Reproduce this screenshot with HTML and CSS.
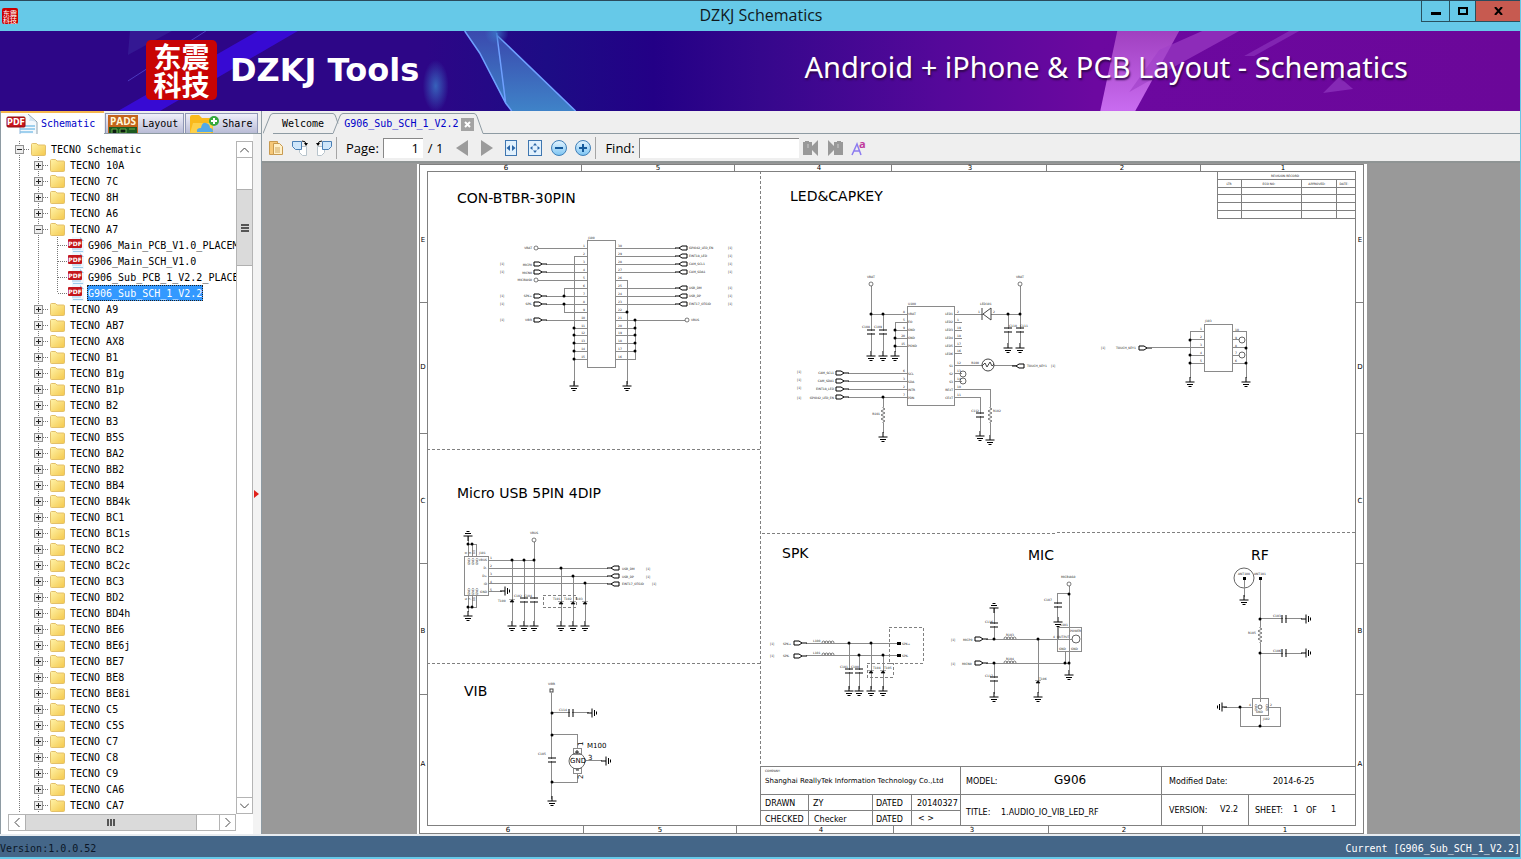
FILE: index.html
```html
<!DOCTYPE html>
<html lang="en">
    <head>
        <meta charset="utf-8">
        <title>DZKJ Schematics</title>
        <link rel="stylesheet" href="styles.css">
    </head>
    <body>
        <!-- shared icons -->
        <svg class="defs" aria-hidden="true">
            <defs>
                <linearGradient id="gFolder" x1="0" y1="0" x2="1" y2="1">
                    <stop offset="0" stop-color="#fff3a8"/>
                    <stop offset="1" stop-color="#f4c84c"/>
                </linearGradient>
                <linearGradient id="gBall" x1="0" y1="0" x2="0" y2="1">
                    <stop offset="0" stop-color="#e4f4ff"/>
                    <stop offset="1" stop-color="#7cc4f2"/>
                </linearGradient>
                <symbol id="folder" viewBox="0 0 15 13">
                    <path d="M.5 1.500q0-1 1-1h4l1.500 1.500h6.500q1 0 1 1v8.500q0 1-1 1h-12q-1 0-1-1z" fill="url(#gFolder)" stroke="#e3c06a"/>
                </symbol>
                <symbol id="pdf" viewBox="0 0 16 16">
                    <path d="M4 0h8l4 4v12h-12z" fill="#eef6fd"/>
                    <path d="M12 0l4 4h-4z" fill="#9cc3e0"/>
                    <path d="M4 12h9M5 14.500h10" stroke="#9ccbea"/>
                    <rect y="2" width="14" height="9" rx="1" fill="#c4161c"/>
                    <text x="7" y="9" class="pdf-txt">PDF</text>
                </symbol>
            </defs>
        </svg>

        <header class="titlebar">
            <svg class="app-icon" viewBox="0 0 16 16" aria-hidden="true">
                <rect width="16" height="16" rx="2" fill="#c00"/>
                <text x="1" y="8" class="app-txt">东震</text>
                <text x="1" y="15" class="app-txt">科技</text>
            </svg>
            <h1>DZKJ Schematics</h1>
            <div class="win-buttons">
                <button class="min" aria-label="Minimize"><svg width="10" height="8"><path d="M0 6.500h10" stroke="#000" stroke-width="3"/></svg></button>
                <button class="max" aria-label="Maximize"><svg width="10" height="8"><rect x="1" y="1" width="8" height="6" fill="none" stroke="#000" stroke-width="2"/></svg></button>
                <button class="close" aria-label="Close"><svg width="9" height="8"><path d="M1 0l7 8M8 0L1 8" stroke="#000" stroke-width="2"/></svg></button>
            </div>
        </header>

        <div class="banner">
            <svg class="banner-art" viewBox="0 0 1521 80" preserveAspectRatio="none" aria-hidden="true">
                <defs>
                    <linearGradient id="gShard" x1="0" y1="0" x2="0" y2="1">
                        <stop offset="0" stop-color="#3a49ae"/>
                        <stop offset="1" stop-color="#3f83c8"/>
                    </linearGradient>
                    <linearGradient id="gPink" x1="0" y1="0" x2="0" y2="1">
                        <stop offset="0" stop-color="#a040c0"/>
                        <stop offset="1" stop-color="#c96cf0"/>
                    </linearGradient>
                    <radialGradient id="gGlow">
                        <stop offset="0" stop-color="#3a78c8" stop-opacity=".8"/>
                        <stop offset="1" stop-color="#3a78c8" stop-opacity="0"/>
                    </radialGradient>
                </defs>
                <path d="M258 0h40L160 80h-42z" fill="#3a0ce0" opacity=".85"/>
                <path d="M130 0h42L128 24z" fill="#3c2aa0" opacity=".5"/>
                <path d="M206 0L128 50" stroke="#5a50d8" opacity=".7"/>
                <ellipse cx="436" cy="55" rx="13" ry="26" fill="url(#gGlow)"/>
                <path d="M465 0h32l10 75-27-53z" fill="url(#gShard)"/>
                <path d="M497 4l79 76h-64l-6-8z" fill="url(#gShard)"/>
                <path d="M465 0l15 22 26 50 6 8M497 2l9 70M497 4l79 76" fill="none" stroke="#6fa0ff" stroke-width="1.500"/>
                <circle cx="497" cy="2" r="12" fill="url(#gGlow)"/>
                <path d="M1118 0h62l-44 80h-35z" fill="url(#gPink)"/>
                <path d="M1203 0h37l-60 33-50 28 30-42z" fill="#a040c8" opacity=".65"/>
                <path d="M1290 0h10l-45 25h-10z" fill="#9038c0" opacity=".6"/>
                <path d="M1340 46l14 12-30 4z" fill="#9038c0" opacity=".7"/>
            </svg>
            <div class="brand">
                <div class="logo" lang="zh"><span>东震</span><span>科技</span></div>
                <strong>DZKJ Tools</strong>
            </div>
            <p class="slogan">Android + iPhone &amp; PCB Layout - Schematics</p>
        </div>

        <main class="workspace">
            <aside class="side">
                <div class="side-tabs" role="tablist">
                    <button class="side-tab active" role="tab" aria-selected="true">
                        <svg width="32" height="20" viewBox="0 0 32 20" aria-hidden="true">
                            <path d="M14 0h8l9 8v12h-17z" fill="#f4f9fd"/>
                            <path d="M22 0l9 8v12" fill="none" stroke="#8fa3b0"/>
                            <path d="M22 1q3 3 1 6 4-1 8 2z" fill="#cfe3f2"/>
                            <path d="M18 12h11M14 15h15M14 18h13" stroke="#9fd0ee" stroke-width="2"/>
                            <path d="M14 13v7" stroke="#8fb8dc"/>
                            <rect x="1" y="3" width="18" height="10" rx="1" fill="#c8141c" stroke="#8d0d12"/>
                            <text x="10" y="11" class="tab-pdf">PDF</text>
                        </svg>
                        Schematic
                    </button>
                    <button class="side-tab" role="tab">
                        <svg width="32" height="18" viewBox="0 0 32 18" aria-hidden="true">
                            <rect x="1" width="30" height="18" fill="#c4641c"/>
                            <rect x="2" y="12" width="28" height="6" fill="#1d5a20"/>
                            <path d="M5 18v-4h5v4M13 14h6v4h-6zM22 14h6" fill="#0c1c10" stroke="#69b04c"/>
                            <text x="16" y="10" class="tab-pads">PADS</text>
                        </svg>
                        Layout
                    </button>
                    <button class="side-tab" role="tab">
                        <svg width="32" height="18" viewBox="0 0 32 18" aria-hidden="true">
                            <path d="M3 2q0-2 2-2h7l3 3h9q2 0 2 2v13H3z" fill="#f9b91c"/>
                            <path d="M3 18L6 8h21l-3 10z" fill="#fdd04a"/>
                            <path d="M10 17q-1-4 4-4 1-6 5-5 4 1 4 5 3 0 3 4z" fill="#54a9e8"/>
                            <circle cx="27" cy="6" r="5" fill="#35a83c"/>
                            <path d="M27 3v6M24 6h6" stroke="#fff" stroke-width="2"/>
                        </svg>
                        Share
                    </button>
                </div>
                <div class="side-body">
                    <div class="tree-wrap">
                        <ul class="tree" id="tree"></ul>
                        <div class="vbar">
                            <button aria-label="Scroll up"><svg width="9" height="6"><path d="M0 5.500l4.500-4.500L9 5.500" class="chev"/></svg></button>
                            <div class="vthumb"><svg width="8" height="8"><path d="M0 1h8M0 4h8M0 7h8" stroke="#555" stroke-width="2"/></svg></div>
                            <button class="end" aria-label="Scroll down"><svg width="9" height="6"><path d="M0 .5L4.500 5 9 .5" class="chev"/></svg></button>
                        </div>
                    </div>
                    <div class="hbar">
                        <button aria-label="Scroll left"><svg width="6" height="9"><path d="M5.500 0L1 4.500 5.500 9" class="chev"/></svg></button>
                        <div class="hthumb"><svg width="8" height="7"><path d="M1 0v7M4 0v7M7 0v7" stroke="#555" stroke-width="2"/></svg></div>
                        <button class="end" aria-label="Scroll right"><svg width="6" height="9"><path d="M.5 0L5 4.500.5 9" class="chev"/></svg></button>
                    </div>
                </div>
                <div class="splitter"><svg width="5" height="8"><path d="M0 0l5 4-5 4z" fill="#e0201a"/></svg></div>
            </aside>

            <section class="docs">
                <div class="doc-tabs" role="tablist">
                    <svg width="10" height="21"><path d="M0 20.500L7 3Q8 .5 10 .5" class="edge"/></svg>
                    <button class="doc-tab" role="tab">Welcome</button>
                    <svg width="10" height="21"><path d="M0 .5q2 0 3 4l2 6M0 20.500L7 3Q8 .5 10 .5" class="edge"/></svg>
                    <div class="doc-tab active"><button role="tab" aria-selected="true">G906_Sub_SCH_1_V2.2</button><button class="x" aria-label="Close tab"><svg width="7" height="7"><path d="M1 1l5 5M6 1L1 6" stroke="#fff" stroke-width="2"/></svg></button></div>
                    <svg width="10" height="21"><path d="M0 .5q2 0 3 3l6 17h1" class="edge"/></svg>
                    <div class="rest"></div>
                </div>

                <div class="toolbar">
                    <button aria-label="Open"><svg width="16" height="16"><path d="M1.500 1.500h8v13h-8z" fill="#f6c878" stroke="#c89a50"/><path d="M5.500 3.500h6l3 3v8h-9z" fill="#fff0c8" stroke="#c89a50"/><path d="M7 8h5M7 10h5M7 12h5" stroke="#d0a860"/></svg></button>
                    <button aria-label="Rotate right"><svg width="16" height="16"><path d="M7.500 6.500h7v9h-4l-3-3z" fill="#fff" stroke="#b8c4cc"/><path d="M.5 1.500h9v8h-6l-3-3z" fill="#cfe6fa" stroke="#4a7fb5"/><path d="M10 1q4 0 4 3" fill="none" stroke="#111"/><path d="M12 3h4l-2 3z"/></svg></button>
                    <button aria-label="Rotate left"><svg width="16" height="16"><path d="M1.500 6.500h7v6l-3 3h-4z" fill="#fff" stroke="#b8c4cc"/><path d="M6.500 1.500h9v5l-3 3h-6z" fill="#cfe6fa" stroke="#4a7fb5"/><path d="M6 1Q2 1 2 4" fill="none" stroke="#111"/><path d="M0 3h4L2 6z"/></svg></button>
                    <span class="sep"></span>
                    <label for="page">Page:</label>
                    <input type="text" id="page" value="1">
                    <span class="total">/ 1</span>
                    <button class="nav" aria-label="Previous page"><svg width="12" height="16"><path d="M12 0v16L0 8z" fill="#9b9b9b"/></svg></button>
                    <button class="nav" aria-label="Next page"><svg width="12" height="16"><path d="M0 0v16l12-8z" fill="#9b9b9b"/></svg></button>
                    <button aria-label="Fit width"><svg width="12" height="16"><rect x=".5" y=".5" width="11" height="15" fill="#e2f1fd" stroke="#3f76b0"/><path d="M5 5v6L1.500 8zM7 5v6l3.500-3z" fill="#2a66a8"/></svg></button>
                    <button aria-label="Fit page"><svg width="14" height="16"><rect x=".5" y=".5" width="13" height="15" fill="#e2f1fd" stroke="#3f76b0"/><path d="M5 5.500L7 3l2 2.500zM5 10.500L7 13l2-2.500zM4.500 6L2 8l2.500 2zM9.500 6L12 8l-2.500 2z" fill="#2a66a8"/></svg></button>
                    <button aria-label="Zoom out"><svg width="16" height="16"><circle cx="8" cy="8" r="7.500" fill="url(#gBall)" stroke="#3f7fb8"/><path d="M4 8h8" stroke="#155a9c" stroke-width="2"/></svg></button>
                    <button aria-label="Zoom in"><svg width="16" height="16"><circle cx="8" cy="8" r="7.500" fill="url(#gBall)" stroke="#3f7fb8"/><path d="M4 8h8M8 4v8" stroke="#155a9c" stroke-width="2"/></svg></button>
                    <span class="sep"></span>
                    <label for="find">Find:</label>
                    <input type="text" id="find">
                    <button aria-label="Find previous"><svg width="16" height="16"><path d="M0 2h2v-1h4v1h3v4l6-6v16l-6-6v5H0z" fill="#999"/><path d="M5 4v4" stroke="#ccc"/></svg></button>
                    <button aria-label="Find next"><svg width="16" height="16"><path d="M16 2h-2v-1h-4v1H7v4L1 0v16l6-6v5h9z" fill="#999"/><path d="M11 4v4" stroke="#ccc"/></svg></button>
                    <button aria-label="Match case"><svg width="16" height="16"><path d="M1 15L6 4l4 11M3 11h6" fill="none" stroke="#8d7cf0" stroke-width="1.500"/><text x="8" y="8" class="case-a">a</text></svg></button>
                </div>

                <div class="viewer">
                    <svg class="sheet" viewBox="416 163 951 671" role="img" aria-label="1.AUDIO_IO_VIB_LED_RF">
                        <defs>
                            <g id="gnd" class="thick"><path d="M0-5v5M-4.500 0h9M-3 2.500h6M-1.500 4.500h3"/></g>
                            <g id="cap" class="thick"><path d="M-4-2h8M-4 2h8"/><path d="M-3 0h6" stroke="#fff" stroke-width="2"/></g>
                            <g id="in" class="thick"><path d="M0-2h5l3 2-3 2h-5z" fill="#fff"/><path d="M8 0h5"/></g>
                            <g id="out" class="thick"><path d="M0-2h-5l-3 2 3 2h5z" fill="#fff"/><path d="M-8 0h-4"/></g>
                            <circle id="dot" r="1.500"/>
                            <circle id="pin" r="2" fill="#fff" stroke="#444" stroke-width=".7"/>
                            <path id="res" d="M0-8v1l2 1-4 2 4 2-4 2 4 2-4 2 4 2-2 1v1" fill="none" stroke="#444" stroke-width=".7"/>
                            <path id="coil" d="M0 0q0-2 1.500-2T3 0q0-2 1.500-2T6 0q0-2 1.500-2T9 0q0-2 1.500-2T12 0" fill="#fff" stroke="#444" stroke-width=".7"/>
                            <path id="tvs" d="M-2 1L0-1.500 2 1zM-2.500-1l1-1M2.500-1l-1-1" stroke="#111" stroke-width=".7"/>
                        </defs>
                        <rect x="417" y="164" width="950" height="670" fill="#fff"/>

                        <!-- frame -->
                        <g class="frame">
                            <path d="M419 164h944v669H419zM427 171h928v654H427z"/>
                            <path d="M581 164v7M734 164v7M891 164v7M1046 164v7M1200 164v7M583 825v8M736 825v8M893 825v8M1048 825v8M1202 825v8"/>
                            <path d="M419 302h8M419 433h8M419 563h8M419 694h8M1355 302h8M1355 433h8M1355 563h8M1355 694h8"/>
                        </g>
                        <g class="mark">
                            <text x="506" y="170">6</text><text x="658" y="170">5</text><text x="819" y="170">4</text><text x="970" y="170">3</text><text x="1122" y="170">2</text><text x="1283" y="170">1</text>
                            <text x="508" y="832">6</text><text x="660" y="832">5</text><text x="821" y="832">4</text><text x="972" y="832">3</text><text x="1124" y="832">2</text><text x="1285" y="832">1</text>
                            <text x="423" y="242">E</text><text x="423" y="369">D</text><text x="423" y="503">C</text><text x="423" y="633">B</text><text x="423" y="766">A</text>
                            <text x="1360" y="242">E</text><text x="1360" y="369">D</text><text x="1360" y="503">C</text><text x="1360" y="633">B</text><text x="1360" y="766">A</text>
                        </g>
                        <path class="dash" d="M760 171v595M427 449l333 1M427 663h333M762 534l593-2"/>

                        <!-- headings -->
                        <g class="head">
                            <text x="457" y="203">CON-BTBR-30PIN</text>
                            <text x="790" y="201">LED&amp;CAPKEY</text>
                            <text x="457" y="498">Micro USB 5PIN 4DIP</text>
                            <text x="464" y="696">VIB</text>
                            <text x="782" y="558">SPK</text>
                            <text x="1028" y="560">MIC</text>
                            <text x="1251" y="560">RF</text>
                        </g>

                        <!-- revision table -->
                        <path class="frame" d="M1217 171v47h138M1217 179h138M1217 187h138M1217 194h138M1217 202h138M1217 210h138M1241 179v39M1301 179v39M1336 179v39"/>
                        <g class="tiny mid">
                            <text x="1285" y="177">REVISION RECORD</text><text x="1229" y="185">LTR</text><text x="1269" y="185">ECO NO:</text><text x="1317" y="185">APPROVED:</text><text x="1344" y="185">DATE:</text>
                        </g>

                        <!-- 30 pin connector -->
                        <path class="wire" d="M587 240h28v127h-28zM538 248h49M574 385V256h13M546 264h41M546 272h41M538 280h49M587 288h-23v8M546 296h41M546 304h41M564 304v8h23M546 320h41M574 328h13M574 335h13M574 343h13M574 351h13M574 359h13"/>
                        <path class="wire" d="M615 248h61M615 256h61M615 264h61M615 272h61M615 280h12v104M615 288h61M615 296h61M615 304h61M615 312h12M615 320h70M635 320v39h-20M615 328h20M615 335h20M615 343h20M615 351h20"/>
                        <use href="#gnd" x="574" y="386"/><use href="#gnd" x="627" y="386"/>
                        <use href="#pin" x="536" y="248"/><use href="#pin" x="536" y="280"/><use href="#pin" x="687" y="320"/>
                        <use href="#in" x="534" y="264"/><use href="#in" x="534" y="272"/><use href="#in" x="534" y="296"/><use href="#in" x="534" y="304"/><use href="#in" x="534" y="320"/>
                        <use href="#out" x="687" y="248"/><use href="#out" x="687" y="256"/><use href="#out" x="687" y="264"/><use href="#out" x="687" y="272"/><use href="#out" x="687" y="288"/><use href="#out" x="687" y="296"/><use href="#out" x="687" y="304"/>
                        <use href="#dot" x="564" y="296"/><use href="#dot" x="564" y="304"/><use href="#dot" x="574" y="328"/><use href="#dot" x="574" y="335"/><use href="#dot" x="574" y="343"/><use href="#dot" x="574" y="351"/><use href="#dot" x="574" y="359"/>
                        <use href="#dot" x="627" y="312"/><use href="#dot" x="635" y="320"/><use href="#dot" x="635" y="328"/><use href="#dot" x="635" y="335"/><use href="#dot" x="635" y="343"/><use href="#dot" x="635" y="351"/>
                        <g class="tiny end">
                            <text x="532" y="249">VBAT</text><text x="532" y="266">MICP0</text><text x="532" y="274">MICN0</text><text x="532" y="281">MICBIAS0</text><text x="532" y="297">SPK+</text><text x="532" y="305">SPK-</text><text x="532" y="321">VIBR</text>
                            <text x="585" y="247">1</text><text x="585" y="255">2</text><text x="585" y="263">3</text><text x="585" y="271">4</text><text x="585" y="279">5</text><text x="585" y="287">6</text><text x="585" y="295">7</text><text x="585" y="303">8</text><text x="585" y="311">9</text><text x="585" y="319">10</text><text x="585" y="327">11</text><text x="585" y="334">12</text><text x="585" y="342">13</text><text x="585" y="350">14</text><text x="585" y="358">15</text>
                        </g>
                        <g class="tiny">
                            <text x="588" y="239">J100</text>
                            <text x="618" y="247">30</text><text x="618" y="255">29</text><text x="618" y="263">28</text><text x="618" y="271">27</text><text x="618" y="279">26</text><text x="618" y="287">25</text><text x="618" y="295">24</text><text x="618" y="303">23</text><text x="618" y="311">22</text><text x="618" y="319">21</text><text x="618" y="327">20</text><text x="618" y="334">19</text><text x="618" y="342">18</text><text x="618" y="350">17</text><text x="618" y="358">16</text>
                            <text x="689" y="249">GPIO42_LED_EN</text><text x="689" y="257">EINT18_LED</text><text x="689" y="265">CAM_SCL1</text><text x="689" y="273">CAM_SDA1</text><text x="689" y="289">USB_DM</text><text x="689" y="297">USB_DP</text><text x="689" y="305">EINT17_OTGID</text><text x="691" y="321">VBUS</text>
                            <text x="500" y="265">[1]</text><text x="500" y="273">[1]</text><text x="500" y="297">[1]</text><text x="500" y="305">[1]</text><text x="500" y="321">[1]</text>
                            <text x="728" y="249">[1]</text><text x="728" y="257">[1]</text><text x="728" y="265">[1]</text><text x="728" y="273">[1]</text><text x="728" y="289">[1]</text><text x="728" y="297">[1]</text><text x="728" y="305">[1]</text>
                        </g>

                        <!-- led driver -->
                        <path class="wire" d="M907 306h47v99h-47zM871 286v65M871 314h36M883 314v37M907 322h-12v30M895 330h12M895 338h12M895 346h12M848 373h59M848 381h59M848 389h59M848 397h59M883 397v36"/>
                        <path class="wire" d="M954 314h66M1020 286v57M1008 314v29M954 322h8M954 330h8M954 338h8M954 346h8M954 353h8M954 365h62M954 373h8M954 381h8M954 389h36v46M954 397h26v34"/>
                        <path d="M991 308v12l-8-6zM982 308v12" fill="#fff" stroke="#444"/>
                        <circle cx="988" cy="365" r="6" fill="#fff" stroke="#444"/><path d="M982 366l3-3 2 4 3-5 2 4 2-2" fill="none" stroke="#444"/>
                        <circle cx="963" cy="374" r="3" class="ring"/><circle cx="963" cy="381" r="3" class="ring"/>
                        <use href="#pin" x="871" y="284"/><use href="#pin" x="1020" y="284"/>
                        <use href="#cap" x="871" y="332"/><use href="#cap" x="883" y="332"/><use href="#cap" x="1008" y="330"/><use href="#cap" x="1020" y="330"/><use href="#cap" x="980" y="415"/>
                        <use href="#gnd" x="871" y="356"/><use href="#gnd" x="883" y="356"/><use href="#gnd" x="895" y="356"/><use href="#gnd" x="1008" y="348"/><use href="#gnd" x="1020" y="348"/><use href="#gnd" x="883" y="437"/><use href="#gnd" x="980" y="436"/><use href="#gnd" x="990" y="440"/>
                        <path d="M883 407v16M990 407v16" stroke="#fff" stroke-width="2"/>
                        <use href="#res" x="883" y="415"/><use href="#res" x="990" y="415"/>
                        <use href="#in" x="836" y="373"/><use href="#in" x="836" y="381"/><use href="#in" x="836" y="389"/><use href="#in" x="836" y="397"/><use href="#out" x="1024" y="366"/>
                        <use href="#dot" x="871" y="314"/><use href="#dot" x="883" y="314"/><use href="#dot" x="895" y="330"/><use href="#dot" x="895" y="338"/><use href="#dot" x="895" y="346"/><use href="#dot" x="883" y="397"/><use href="#dot" x="1008" y="314"/><use href="#dot" x="1020" y="314"/>
                        <g class="tiny end">
                            <text x="834" y="374">CAM_SCL1</text><text x="834" y="382">CAM_SDA1</text><text x="834" y="390">EINT18_LED</text><text x="834" y="399">GPIO42_LED_EN</text>
                            <text x="905" y="313">8</text><text x="905" y="321">5</text><text x="905" y="329">9</text><text x="905" y="337">20</text><text x="905" y="345">15</text><text x="905" y="372">6</text><text x="905" y="380">3</text><text x="905" y="388">2</text><text x="905" y="396">7</text>
                            <text x="953" y="315">LED1</text><text x="953" y="323">LED2</text><text x="953" y="331">LED3</text><text x="953" y="339">LED4</text><text x="953" y="347">LED5</text><text x="953" y="355">LED6</text><text x="953" y="367">S1</text><text x="953" y="375">S2</text><text x="953" y="383">S3</text><text x="953" y="391">REXT</text><text x="953" y="399">CEXT</text>
                            <text x="880" y="415">R101</text><text x="979" y="412">C112</text><text x="979" y="364">R100</text>
                        </g>
                        <g class="tiny">
                            <text x="867" y="278">VBAT</text><text x="1016" y="278">VBAT</text><text x="908" y="305">U100</text><text x="980" y="305">LED101</text>
                            <text x="908" y="315">VBAT</text><text x="908" y="323">EO</text><text x="908" y="331">GND</text><text x="908" y="339">GND</text><text x="908" y="347">PGND</text><text x="908" y="375">SCL</text><text x="908" y="383">SDA</text><text x="908" y="391">INTR</text><text x="908" y="399">PDN</text>
                            <text x="957" y="313">2</text><text x="957" y="321">1</text><text x="957" y="329">19</text><text x="957" y="337">18</text><text x="957" y="345">17</text><text x="957" y="352">16</text><text x="957" y="364">12</text><text x="957" y="372">13</text><text x="957" y="380">14</text><text x="957" y="388">10</text><text x="957" y="396">11</text>
                            <text x="978" y="313">1</text><text x="993" y="313">2</text>
                            <text x="862" y="328">C108</text><text x="874" y="328">C109</text><text x="1009" y="327">C110</text><text x="1020" y="327">C111</text><text x="993" y="412">R102</text>
                            <text x="797" y="373">[1]</text><text x="797" y="381">[1]</text><text x="797" y="389">[1]</text><text x="797" y="399">[1]</text>
                            <text x="1027" y="367">TOUCH_KEY1</text><text x="1051" y="367">[1]</text>
                        </g>

                        <!-- key connector -->
                        <path class="wire" d="M1204 324h28v47h-28zM1190 378v-47h14M1190 339h14M1152 347h52M1190 355h14M1190 363h14M1232 331h14v47M1232 339h7M1232 347h14M1232 355h7M1232 363h14"/>
                        <circle cx="1242" cy="340" r="3" class="ring"/><circle cx="1242" cy="355" r="3" class="ring"/>
                        <use href="#gnd" x="1190" y="382"/><use href="#gnd" x="1246" y="382"/><use href="#in" x="1139" y="348"/>
                        <use href="#dot" x="1190" y="340"/><use href="#dot" x="1190" y="355"/><use href="#dot" x="1190" y="363"/><use href="#dot" x="1246" y="348"/><use href="#dot" x="1246" y="363"/>
                        <g class="tiny">
                            <text x="1101" y="349">[1]</text><text x="1116" y="349">TOUCH_KEY1</text><text x="1205" y="322">J103</text>
                            <text x="1200" y="330">1</text><text x="1200" y="338">2</text><text x="1200" y="346">3</text><text x="1200" y="354">4</text><text x="1200" y="362">5</text>
                            <text x="1235" y="331">10</text><text x="1235" y="339">9</text><text x="1235" y="347">8</text><text x="1235" y="354">7</text><text x="1235" y="362">6</text>
                        </g>

                        <!-- micro usb -->
                        <path class="wire" d="M464 556h24v39h-24zM488 560h46M534 542v79M512 560v61M524 560v61M488 568h120M488 576h120M488 583h120M488 591h14M561 568v53M573 576v45M585 583v38"/>
                        <path class="wire" d="M468 536v20M472 544v12M468 544h8v12M468 595v17M472 595v12M476 595v12h-8"/>
                        <path class="dash" d="M543 595h33v12h-33z"/>
                        <use href="#pin" x="534" y="540"/><use href="#cap" x="524" y="600"/><use href="#cap" x="534" y="600"/>
                        <use href="#tvs" x="512" y="601"/><use href="#tvs" x="561" y="603"/><use href="#tvs" x="573" y="603"/><use href="#tvs" x="585" y="603"/>
                        <use href="#gnd" x="512" y="626"/><use href="#gnd" x="524" y="626"/><use href="#gnd" x="534" y="626"/><use href="#gnd" x="561" y="626"/><use href="#gnd" x="573" y="626"/><use href="#gnd" x="585" y="626"/><use href="#gnd" x="468" y="616"/>
                        <use href="#gnd" transform="translate(468 536) rotate(180)"/><use href="#gnd" transform="translate(505 591) rotate(-90)"/>
                        <use href="#dot" x="512" y="560"/><use href="#dot" x="524" y="560"/><use href="#dot" x="534" y="560"/><use href="#dot" x="561" y="568"/><use href="#dot" x="573" y="576"/><use href="#dot" x="585" y="583"/><use href="#dot" x="468" y="544"/><use href="#dot" x="472" y="544"/><use href="#dot" x="468" y="607"/><use href="#dot" x="472" y="607"/>
                        <use href="#out" x="619" y="568"/><use href="#out" x="619" y="576"/><use href="#out" x="619" y="584"/>
                        <g class="tiny">
                            <text x="530" y="534">VBUS</text><text x="479" y="554">J101</text>
                            <text x="490" y="559">1</text><text x="490" y="567">2</text><text x="490" y="575">3</text><text x="490" y="583">4</text><text x="490" y="591">5</text>
                            <text x="622" y="570">USB_DM</text><text x="622" y="578">USB_DP</text><text x="622" y="585">EINT17_OTGID</text><text x="646" y="570">[1]</text><text x="646" y="578">[1]</text><text x="652" y="585">[1]</text>
                            <text x="498" y="602">T100</text><text x="514" y="597">C102</text><text x="524" y="597">C104</text><text x="553" y="600">T101</text><text x="564" y="600">T102</text><text x="575" y="600">T103</text>
                            <text transform="translate(470 565) rotate(-90)">GND</text><text transform="translate(474 565) rotate(-90)">GND</text><text transform="translate(478 565) rotate(-90)">GND</text>
                            <text transform="translate(470 595) rotate(-90)">GND</text><text transform="translate(474 595) rotate(-90)">GND</text><text transform="translate(478 595) rotate(-90)">GND</text>
                            <text transform="translate(467 554) rotate(-90)">8</text><text transform="translate(471 554) rotate(-90)">9</text><text transform="translate(475 554) rotate(-90)">10</text>
                            <text transform="translate(467 600) rotate(-90)">6</text><text transform="translate(471 600) rotate(-90)">7</text><text transform="translate(475 601) rotate(-90)">11</text>
                        </g>
                        <g class="tiny end"><text x="487" y="561">VBUS</text><text x="487" y="569">D-</text><text x="487" y="577">D+</text><text x="487" y="585">ID</text><text x="487" y="593">GND</text></g>

                        <!-- vibrator -->
                        <path class="wire" d="M551 693v106M551 712h38M551 734h26v14M577 773v9h-26M586 760h16M573 748h8v6h-8zM573 768h8v5h-8z"/>
                        <circle cx="577" cy="761" r="8" class="ring"/>
                        <path d="M575 752h4M577 750v4M576 770h3" stroke="#222"/>
                        <rect x="550" y="689" width="3" height="3" fill="#fff" stroke="#444"/>
                        <use href="#cap" x="552" y="760"/><use href="#cap" transform="translate(571 713) rotate(90)"/>
                        <use href="#gnd" x="552" y="801"/><use href="#gnd" transform="translate(592 713) rotate(-90)"/><use href="#gnd" transform="translate(606 761) rotate(-90)"/>
                        <use href="#dot" x="552" y="713"/><use href="#dot" x="552" y="735"/><use href="#dot" x="552" y="782"/>
                        <g class="tiny"><text x="548" y="685">VIBR</text><text x="559" y="711">C114</text><text x="538" y="755">C105</text></g>
                        <g class="part"><text x="570" y="763">GND</text><text x="587" y="748">M100</text><text x="588" y="760">3</text><text transform="translate(583 746) rotate(-90)">1</text><text transform="translate(583 779) rotate(-90)">2</text></g>

                        <!-- speaker -->
                        <path class="wire" d="M806 643h93M806 655h93M849 643v46M859 655v34M871 643v46M883 655v34"/>
                        <path class="dash" d="M889 627h34v36h-34zM867 663h26v14h-26z"/>
                        <use href="#in" x="794" y="643"/><use href="#in" x="794" y="656"/><use href="#coil" x="822" y="643"/><use href="#coil" x="822" y="655"/>
                        <use href="#cap" x="849" y="671"/><use href="#cap" x="859" y="671"/><use href="#tvs" x="871" y="672"/><use href="#tvs" x="883" y="672"/>
                        <use href="#gnd" x="849" y="691"/><use href="#gnd" x="859" y="691"/><use href="#gnd" x="871" y="691"/><use href="#gnd" x="883" y="691"/>
                        <use href="#dot" x="849" y="643"/><use href="#dot" x="871" y="643"/><use href="#dot" x="859" y="655"/><use href="#dot" x="883" y="655"/>
                        <path d="M897 642h4v3h-4zM897 654h4v3h-4z"/>
                        <g class="tiny">
                            <text x="770" y="645">[1]</text><text x="770" y="657">[1]</text><text x="783" y="645">SPK+</text><text x="783" y="657">SPK-</text><text x="813" y="642">L100</text><text x="813" y="654">L101</text>
                            <text x="902" y="645">SPK+</text><text x="902" y="657">SPK-</text><text x="840" y="668">C101</text><text x="851" y="668">C100</text><text x="873" y="669">T104</text><text x="884" y="669">T105</text>
                        </g>

                        <!-- microphone -->
                        <path class="wire" d="M986 639h86M986 663h83M994 608v31M994 663v31M1038 639v54M1069 586v84M1069 593h-12v24M1057 627h24v24h-24zM1065 651v12M1058 627v12"/>
                        <use href="#in" x="975" y="639"/><use href="#in" x="975" y="663"/><use href="#coil" x="1004" y="639"/><use href="#coil" x="1004" y="663"/>
                        <circle cx="1076" cy="639" r="4" class="ring"/><use href="#pin" x="1069" y="584"/>
                        <use href="#cap" x="994" y="625"/><use href="#cap" x="994" y="679"/><use href="#cap" x="1058" y="605"/><use href="#tvs" x="1038" y="682"/>
                        <use href="#gnd" transform="translate(994 608) rotate(180)"/><use href="#gnd" x="994" y="697"/><use href="#gnd" x="1038" y="697"/><use href="#gnd" x="1058" y="622"/><use href="#gnd" x="1069" y="675"/>
                        <use href="#dot" x="994" y="639"/><use href="#dot" x="1038" y="639"/><use href="#dot" x="994" y="663"/><use href="#dot" x="1065" y="663"/><use href="#dot" x="1069" y="663"/><use href="#dot" x="1069" y="594"/>
                        <g class="tiny">
                            <text x="951" y="641">[1]</text><text x="951" y="665">[1]</text><text x="963" y="641">MICP0</text><text x="962" y="665">MICN0</text><text x="985" y="623">C116</text><text x="985" y="677">C117</text><text x="1006" y="636">R103</text><text x="1006" y="660">R104</text>
                            <text x="1039" y="680">T106</text><text x="1061" y="578">MICBIAS0</text><text x="1044" y="601">C107</text><text x="1060" y="626">U101</text><text x="1070" y="632">POWER</text><text x="1057" y="638">OUTPUT</text><text x="1059" y="650">GND</text><text x="1071" y="650">GND</text><text x="1053" y="638">4</text>
                        </g>

                        <!-- antenna -->
                        <circle cx="1244" cy="578" r="10" class="ring"/>
                        <path class="wire" d="M1244 578v19M1260 578v124M1260 618h42M1260 653h42M1252 698h16v17h-16zM1224 707h28M1240 707v19h40v-19h-12M1260 715v11"/>
                        <path d="M1243 577h3v3h-3zM1259 577h3v3h-3z"/>
                        <path d="M1260 627v16" stroke="#fff" stroke-width="2"/><use href="#res" x="1260" y="635"/><circle cx="1260" cy="707" r="2" class="ring"/>
                        <use href="#cap" transform="translate(1284 619) rotate(90)"/><use href="#cap" transform="translate(1284 653) rotate(90)"/>
                        <use href="#gnd" x="1244" y="600"/><use href="#gnd" transform="translate(1306 619) rotate(-90)"/><use href="#gnd" transform="translate(1306 653) rotate(-90)"/><use href="#gnd" transform="translate(1222 707) rotate(90)"/>
                        <use href="#dot" x="1260" y="619"/><use href="#dot" x="1260" y="653"/><use href="#dot" x="1240" y="707"/><use href="#dot" x="1260" y="726"/>
                        <g class="tiny">
                            <text x="1238" y="575">ANT100</text><text x="1254" y="575">ANT101</text><text x="1273" y="617">C103</text><text x="1273" y="652">C106</text><text x="1248" y="634">R105</text><text x="1263" y="720">J102</text><text x="1256" y="713">GND</text><text x="1249" y="706">4</text><text x="1270" y="706">2</text>
                            <text transform="translate(1257 711) rotate(-90)">GND</text><text transform="translate(1268 711) rotate(-90)">GND</text>
                        </g>

                        <!-- title block -->
                        <path class="frame" d="M760 825v-59h595M760 794h595M760 810h200M808 794v31M872 794v31M911 794v31M960 766v59M1161 766v59M1248 794v31"/>
                        <g class="info">
                            <text x="765" y="772" class="tiny">COMPANY:</text>
                            <text x="765" y="783" class="co">Shanghai ReallyTek Information Technology Co.,Ltd</text>
                            <text x="765" y="806">DRAWN</text><text x="813" y="806">ZY</text><text x="876" y="806">DATED</text><text x="917" y="806">20140327</text>
                            <text x="765" y="822">CHECKED</text><text x="814" y="822">Checker</text><text x="876" y="822">DATED</text><text x="918" y="821">&lt; &gt;</text>
                            <text x="966" y="784">MODEL:</text><text x="1054" y="784" class="model">G906</text>
                            <text x="966" y="815">TITLE:</text><text x="1001" y="815">1.AUDIO_IO_VIB_LED_RF</text>
                            <text x="1169" y="784">Modified Date:</text><text x="1273" y="784">2014-6-25</text>
                            <text x="1169" y="813">VERSION:</text><text x="1220" y="812">V2.2</text>
                            <text x="1255" y="813">SHEET:</text><text x="1293" y="812">1</text><text x="1306" y="813">OF</text><text x="1331" y="812">1</text>
                        </g>
                    </svg>
                </div>
            </section>
        </main>

        <footer class="status">
            <span>Version:1.0.0.52</span>
            <span class="current">Current [G906_Sub_SCH_1_V2.2]</span>
        </footer>
        <script src="script.js"></script>
    </body>
</html>
```
FILE: styles.css
```css
:root {
    --line: #8e9ba3;
    --face: #efefef;
    --sky: #66c9e8;
    --mono: "DejaVu Sans Mono", "Liberation Mono", monospace;
    --ui: "Open Sans", "Noto Sans", sans-serif;
    --draw: "DejaVu Sans", sans-serif;
}

* {
    margin: 0;
    padding: 0;
    box-sizing: border-box;
}

body {
    height: 100vh;
    display: flex;
    flex-direction: column;
    overflow: hidden;
    background: var(--face);
    font: 10px/16px var(--mono);
    color: #000;
    border-right: 1px solid var(--sky);
    border-bottom: 2px solid var(--sky);
}

button {
    border: 0;
    background: none;
    font: inherit;
    color: inherit;
}

svg {
    flex: none;
    display: block;
}

.defs {
    position: absolute;
    width: 0;
    height: 0;
}

/* title bar */
.titlebar {
    flex: none;
    height: 31px;
    display: grid;
    grid-template-columns: 1fr auto 1fr;
    align-items: center;
    background: var(--sky);
    border-top: 1px solid #2a4a5c;
    padding-left: 2px;
}

.titlebar h1 {
    font: 16px/22px var(--ui);
    padding-bottom: 2px;
    color: #10181c;
}

.app-icon {
    width: 16px;
    height: 16px;
}

.app-txt {
    font: 7px "Noto Sans CJK SC", sans-serif;
    fill: #fff;
}

.win-buttons {
    display: flex;
    align-self: start;
    justify-self: end;
}

.win-buttons button {
    height: 21px;
    display: flex;
    align-items: center;
    justify-content: center;
    border: 1px solid #28505e;
    border-top: 0;
    border-right: 0;
}

.win-buttons .min {
    width: 28px;
}

.win-buttons .max {
    width: 26px;
}

.win-buttons .close {
    width: 45px;
    background: #c75a50;
}

/* banner */
.banner {
    flex: none;
    height: 80px;
    position: relative;
    display: flex;
    align-items: center;
    justify-content: space-between;
    padding: 0 112px 2px 146px;
    background: linear-gradient(90deg, #2d0687 0, #2d0687 28%, #1d0c85 36%, #230086 43%, #35078c 50%, #55089a 62%, #6c08a0 72%, #6b0799 100%);
    color: #fff;
}

.banner-art {
    position: absolute;
    inset: 0;
    width: 100%;
    height: 100%;
}

.brand {
    position: relative;
    display: flex;
    align-items: center;
    gap: 13px;
}

.logo {
    width: 71px;
    height: 60px;
    display: flex;
    flex-direction: column;
    align-items: center;
    justify-content: center;
    background: #c80404;
    border-radius: 5px;
    font: bold 28px/28px "Noto Sans CJK SC", sans-serif;
}

.brand strong {
    font: bold 32px/40px var(--draw);
}

.slogan {
    position: relative;
    padding-bottom: 6px;
    font: 29px/36px "Noto Sans", sans-serif;
    text-shadow: 1px 2px 2px #30084c;
}

/* workspace */
.workspace {
    flex: 1;
    min-height: 0;
    display: flex;
    border-bottom: 2px solid #e8ecf0;
}

.side {
    flex: none;
    width: 262px;
    display: grid;
    grid-template: 23px minmax(0, 1fr) / 1fr 8px;
    border-left: 1px solid var(--line);
    border-right: 1px solid var(--line);
}

.side-tabs {
    grid-column: 1 / 3;
    display: flex;
    align-items: flex-end;
    gap: 1px;
    border-bottom: 1px solid var(--line);
}

.side-tab {
    height: 20px;
    display: flex;
    align-items: center;
    gap: 3px;
    padding: 0 5px 0 1px;
    border: 1px solid #8f97b5;
    border-bottom: 0;
    background: linear-gradient(#f0f0fa, #b9bcd6);
}

.side-tab.active {
    height: 23px;
    margin-bottom: -1px;
    padding: 0 9px 0 5px;
    border: 0;
    border-top: 2px solid #f5b64c;
    background: #fff;
    color: #0000c8;
}

.tab-pdf {
    font: bold 8px var(--draw);
    fill: #fff;
    text-anchor: middle;
}

.tab-pads {
    font: bold 10px var(--ui);
    fill: #fff8dc;
    text-anchor: middle;
}

.side-body {
    min-width: 0;
    display: flex;
    flex-direction: column;
    padding: 7px 0 3px 7px;
    background: #fff;
}

.tree-wrap {
    flex: 1;
    min-height: 0;
    display: flex;
}

.tree {
    flex: 1;
    min-width: 0;
    padding-left: 2px;
    overflow: hidden;
    list-style: none;
}

.tree ul {
    list-style: none;
}

.row {
    height: 16px;
    display: flex;
    align-items: center;
    white-space: nowrap;
}

/* dotted guide, one cell for each level */
.guide {
    flex: none;
    width: 19px;
    height: 16px;
    background: repeating-linear-gradient(#777 0 1px, transparent 1px 2px) 9px 0 / 1px 100% no-repeat;
}

.knot {
    display: flex;
    align-items: center;
    padding-left: 5px;
    background:
        repeating-linear-gradient(#777 0 1px, transparent 1px 2px) 9px 0 / 1px 100% no-repeat,
        repeating-linear-gradient(90deg, #777 0 1px, transparent 1px 2px) 10px 8px / 9px 1px no-repeat;
}

.knot.last {
    background-size: 1px 8px, 9px 1px;
}

.toggle {
    width: 9px;
    height: 9px;
    border: 1px solid #919191;
    background: linear-gradient(#222, #222) center / 5px 1px no-repeat, #eee;
}

.toggle.closed {
    background: linear-gradient(#222, #222) center / 5px 1px no-repeat, linear-gradient(#222, #222) center / 1px 5px no-repeat, #eee;
}

.icon {
    width: 15px;
    height: 13px;
    margin: 0 4px 0 2px;
}

.icon.file {
    width: 16px;
    height: 16px;
    margin: 0 3px 0 1px;
}

.pdf-txt {
    font: bold 6px var(--draw);
    fill: #fff;
    text-anchor: middle;
}

.name {
    height: 16px;
    padding: 0 1px;
    line-height: 18px;
}

.name.selected {
    background: #3399ff;
    color: #fff;
    outline: 1px dotted #222;
    outline-offset: -1px;
}

/* scroll bars */
.vbar,
.hbar {
    flex: none;
    display: flex;
    background: #fff;
}

.vbar {
    width: 17px;
    flex-direction: column;
    border: 1px solid #b4b4b4;
}

.hbar {
    height: 17px;
    margin-right: 17px;
    border: 1px solid #b4b4b4;
}

.vbar button,
.hbar button {
    width: 15px;
    height: 16px;
    display: flex;
    align-items: center;
    justify-content: center;
}

.hbar button {
    width: 16px;
    height: 15px;
}

.vbar .end {
    margin-top: auto;
    border-top: 1px solid #b4b4b4;
}

.hbar .end {
    margin-left: auto;
    border-left: 1px solid #b4b4b4;
}

.vthumb,
.hthumb {
    display: flex;
    align-items: center;
    justify-content: center;
    background: #dadada;
}

.vthumb {
    height: 77px;
    margin-top: 31px;
    border: solid #b0b0b0;
    border-width: 1px 0;
}

.hthumb {
    width: 172px;
    border: solid #b0b0b0;
    border-width: 0 1px;
}

.vbar button:first-child {
    border-bottom: 1px solid #b4b4b4;
}

.chev {
    fill: none;
    stroke: #444;
}

.splitter {
    display: flex;
    align-items: center;
    padding: 20px 0 0 1px;
    background: #f3f3f3;
}

/* documents */
.docs {
    flex: 1;
    min-width: 0;
    display: flex;
    flex-direction: column;
}

.doc-tabs {
    flex: none;
    height: 23px;
    display: flex;
    align-items: flex-end;
    padding-left: 1px;
}

.edge {
    fill: none;
    stroke: var(--line);
}

.doc-tab {
    height: 21px;
    padding: 0 9px;
    border-top: 1px solid var(--line);
}

button.doc-tab {
    border-bottom: 1px solid var(--line);
}

.doc-tab.active {
    display: flex;
    align-items: center;
    gap: 2px;
    padding: 0 0 0 1px;
    color: #0000c8;
}

.x {
    width: 13px;
    height: 13px;
    display: flex;
    align-items: center;
    justify-content: center;
    background: #a3a3a3;
}

.rest {
    flex: 1;
    border-bottom: 1px solid var(--line);
}

.toolbar {
    flex: none;
    height: 27px;
    display: flex;
    align-items: center;
    padding-left: 2px;
    font: 13px/20px var(--ui);
}

.toolbar button {
    width: 24px;
    height: 24px;
    display: flex;
    align-items: center;
    justify-content: center;
}

.toolbar button.nav {
    width: 25px;
}

.toolbar label {
    margin: 0 4px 0 9px;
}

.toolbar input {
    height: 20px;
    border: 0;
    border-top: 1px solid #888;
    border-left: 1px solid #888;
    background: #fff;
    font: inherit;
}

#page {
    width: 40px;
    padding-right: 4px;
    text-align: right;
}

#find {
    width: 160px;
}

.total {
    padding: 0 6px 0 5px;
}

.sep {
    width: 1px;
    height: 22px;
    background: #a5a5a5;
}

.case-a {
    font: bold 11px var(--ui);
    fill: #c0399c;
}

.viewer {
    flex: 1;
    min-height: 0;
    display: flex;
    justify-content: center;
    background: #999;
    border-top: 2px solid #8f9494;
}

.sheet {
    height: 100%;
    max-width: 100%;
    font-family: var(--draw);
}

.frame,
.wire,
.dash {
    fill: none;
    stroke: #808080;
    shape-rendering: crispEdges;
}

.wire {
    stroke: #8a8a8a;
}

.dash {
    stroke-dasharray: 3 2;
}

.thick {
    fill: none;
    stroke: #000;
}

.ring {
    fill: none;
    stroke: #666;
}

.tiny {
    font-size: 3px;
    fill: #222;
}

.mid,
.mark {
    text-anchor: middle;
}

.end {
    text-anchor: end;
}

.mark,
.part {
    font-size: 7px;
}

.head {
    font-size: 14px;
}

.info {
    font-size: 8px;
}

.info .tiny {
    font-size: 3px;
}

.info .co {
    font-size: 7px;
}

.info .model {
    font-size: 12px;
}

/* status bar */
.status {
    flex: none;
    height: 21px;
    display: flex;
    justify-content: space-between;
    align-items: flex-end;
    background: #446688;
    color: #0b1626;
}

.current {
    color: #fff;
}
```
FILE: script.js
```javascript
var folders = ['10A', '7C', '8H', 'A6', 'A7', 'A9', 'AB7', 'AX8', 'B1', 'B1g', 'B1p', 'B2', 'B3', 'B5S',
    'BA2', 'BB2', 'BB4', 'BB4k', 'BC1', 'BC1s', 'BC2', 'BC2c', 'BC3', 'BD2', 'BD4h', 'BE6', 'BE6j', 'BE7',
    'BE8', 'BE8i', 'C5', 'C5S', 'C7', 'C8', 'C9', 'CA6', 'CA7']
var files = {
    'A7': ['G906_Main_PCB_V1.0_PLACEMENT', 'G906_Main_SCH_V1.0', 'G906_Sub_PCB_1_V2.2_PLACEMENT', 'G906_Sub_SCH_1_V2.2']
}
var current = 'G906_Sub_SCH_1_V2.2'

function folderRow(name, level, open) {
    var guides = level ? '<span class="guide"></span>' : ''
    return '<div class="row">' + guides +
        '<span class="guide knot"><button class="toggle' + (open ? '' : ' closed') + '" aria-label="' + name + '"></button></span>' +
        '<svg class="icon"><use href="#folder"/></svg><span class="name">' + name + '</span></div>'
}

function fileRow(name, last) {
    return '<li><div class="row"><span class="guide"></span><span class="guide"></span>' +
        '<span class="guide knot' + (last ? ' last' : '') + '"></span>' +
        '<svg class="icon file"><use href="#pdf"/></svg>' +
        '<span class="name' + (name == current ? ' selected' : '') + '">' + name + '</span></div></li>'
}

function build() {
    var html = '<li>' + folderRow('TECNO Schematic', 0, true) + '<ul>'
    folders.forEach(function (f) {
        var list = files[f]
        html += '<li>' + folderRow('TECNO ' + f, 1, !!list)
        if (list) {
            html += '<ul>'
            list.forEach(function (name, i) {
                html += fileRow(name, i == list.length - 1)
            })
            html += '</ul>'
        }
        html += '</li>'
    })
    document.getElementById('tree').innerHTML = html + '</ul></li>'
}

build()
```
